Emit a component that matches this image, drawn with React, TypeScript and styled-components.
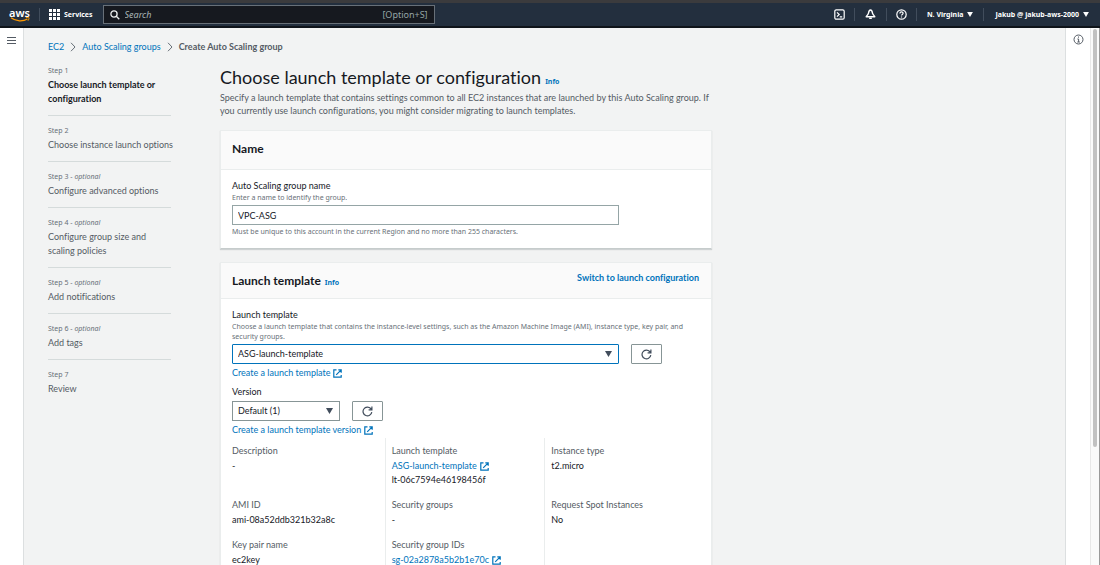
import React from 'react';
import styled, { createGlobalStyle, css } from 'styled-components';

const smallFont = "'Noto Sans', 'Open Sans', sans-serif";

const GlobalStyle = createGlobalStyle`
  *, *::before, *::after { box-sizing: border-box; }
  html, body { margin: 0; }
  body {
    font-family: Lato, 'Noto Sans', sans-serif;
    font-size: 9px;
    line-height: 14px;
    font-variant-ligatures: none;
    color: #16191f;
    background: #f2f3f3;
  }
  button, input, select { font: inherit; color: inherit; }
  h1, h2, p, ol, dl, dt, dd { margin: 0; padding: 0; }
  ol { list-style: none; }
`;

const Shell = styled.div`
  display: flex;
  flex-direction: column;
  height: 100vh;
  overflow: hidden;
`;

const TopBar = styled.header`
  display: flex;
  align-items: center;
  flex: none;
  height: 28px;
  padding-left: 9px;
  background: #232f3e;
  border-top: 3px solid #3b3b3d;
  border-bottom: 2px solid #0f141a;
  color: #fff;
  font-family: ${smallFont};
  font-size: 7px;
  font-weight: 700;
`;

const Logo = styled.a`
  display: flex;
  flex-direction: column;
  align-items: center;
  width: 21px;
  color: #fff;
  font-size: 11px;
  font-weight: 600;
  line-height: 9px;
  text-decoration: none;
  svg { display: block; }
`;

const BarDivider = styled.span<{ $space?: number }>`
  width: 1px;
  height: 13px;
  margin: 0 ${(p) => p.$space ?? 0}px;
  background: #414d5c;
`;

const BarButton = styled.button<{ $pad: number }>`
  display: flex;
  align-items: center;
  gap: 4px;
  padding: 0 ${(p) => p.$pad}px;
  border: 0;
  background: none;
  color: #fff;
  white-space: nowrap;
  svg { display: block; }
`;

const SearchBox = styled.label`
  display: flex;
  align-items: center;
  gap: 5px;
  flex: 0 1 332px;
  min-width: 120px;
  height: 19px;
  margin-left: 10px;
  padding: 0 6px;
  border: 1px solid #687078;
  background: #16191f;
  color: #95a5a6;
  font-size: 9px;
  font-weight: 400;
`;

const SearchInput = styled.input`
  flex: 1;
  min-width: 0;
  padding: 0;
  border: 0;
  outline: 0;
  background: none;
  &::placeholder { color: #aab7b8; font-style: italic; opacity: 1; }
`;

const BarEnd = styled.div`
  display: flex;
  align-items: center;
  margin-left: auto;
`;

const Body = styled.div`
  display: flex;
  flex: 1;
  min-height: 0;
`;

const Rail = styled.aside<{ $side: 'left' | 'right' }>`
  flex: none;
  width: ${(p) => (p.$side === 'left' ? 24 : 25)}px;
  padding-top: 6px;
  background: #fff;
  ${(p) =>
    p.$side === 'left'
      ? css`border-right: 1px solid #dcdfe0;`
      : css`border-left: 1px solid #dcdfe0;`}
`;

const RailButton = styled.button`
  display: flex;
  justify-content: center;
  width: 100%;
  padding: 0;
  border: 0;
  background: none;
  color: #545b64;
`;

const ScrollTrack = styled.div`
  flex: none;
  width: 10px;
  padding: 1px 2px 0;
  background: #fafafa;
  border-left: 1px solid #e8e8e8;
  border-right: 1px solid #9a9a9a;
`;

const ScrollThumb = styled.div`
  height: 78%;
  border-radius: 3px;
  background: #c1c1c1;
`;

const Main = styled.main`
  flex: 1;
  min-width: 0;
  overflow: hidden;
  padding: 12px 24px 0;
`;

const Breadcrumbs = styled.nav`
  display: flex;
  align-items: center;
  gap: 6px;
  height: 14px;
  margin-bottom: 10px;
`;

const Crumb = styled.span`
  color: #545b64;
  font-weight: 700;
`;

const Link = styled.a<{ $bold?: boolean }>`
  color: #0073bb;
  font-weight: ${(p) => (p.$bold ? 700 : 400)};
  text-decoration: none;
  svg { margin-left: 3px; vertical-align: -2px; }
`;

const InfoLink = styled(Link)`
  margin-left: 4px;
  font-family: ${smallFont};
  font-size: 7px;
  font-weight: 700;
  line-height: 1;
`;

const Columns = styled.div`
  display: grid;
  grid-template-columns: 123px minmax(0, 492px);
  gap: 49px;
`;

const Step = styled.li<{ $active?: boolean }>`
  padding-bottom: 9px;
  margin-bottom: 8px;
  border-bottom: 1px solid #d5dbdb;
  color: ${(p) => (p.$active ? '#16191f' : '#545b64')};
  font-weight: ${(p) => (p.$active ? 700 : 400)};
  &:last-child { border-bottom: 0; }
`;

const StepLabel = styled.div`
  color: #687078;
  font-family: ${smallFont};
  font-size: 7px;
  font-weight: 400;
`;

const StepTitle = styled.div`
  margin-right: -3px;
`;

const PageTitle = styled.h1`
  font-size: 18px;
  font-weight: 400;
  line-height: 27px;
`;

const Intro = styled.p`
  margin-bottom: 13px;
  color: #545b64;
  line-height: 13px;
`;

const Card = styled.section`
  margin-bottom: 13px;
  background: #fff;
  border: 1px solid #eaeded;
  border-bottom-color: #c6cccc;
  box-shadow: 0 1px 1px rgba(0, 28, 36, 0.15);
`;

const CardHeader = styled.header<{ $height: number }>`
  display: flex;
  align-items: flex-start;
  justify-content: space-between;
  height: ${(p) => p.$height}px;
  padding: 8px 12px 0 11px;
  background: #fafafa;
  border-bottom: 1px solid #eaeded;
`;

const CardTitle = styled.h2`
  font-size: 12px;
  font-weight: 700;
  line-height: 20px;
`;

const CardBody = styled.div`
  padding: 9px 0 11px 11px;
`;

const Field = styled.div`
  & + & { margin-top: 5px; }
`;

const FieldLabel = styled.label`
  display: block;
`;

const Hint = styled.p`
  padding-right: 12px;
  color: #687078;
  font-family: ${smallFont};
  font-size: 7px;
  line-height: 10px;
`;

const ControlRow = styled.div`
  display: flex;
  align-items: center;
  gap: 12px;
  margin: 2px 0;
`;

const TextInput = styled.input`
  flex: 0 1 387px;
  min-width: 0;
  height: 20px;
  padding: 0 5px;
  border: 1px solid #95a5a6;
  background: #fff;
`;

const SelectWrap = styled.div<{ $width: number }>`
  position: relative;
  flex: 0 1 ${(p) => p.$width}px;
  svg { position: absolute; right: 7px; top: 7px; pointer-events: none; color: #414d5c; }
`;

const Select = styled.select<{ $focus?: boolean }>`
  display: block;
  width: 100%;
  height: 20px;
  padding: 0 18px 0 5px;
  appearance: none;
  border: 1px solid ${(p) => (p.$focus ? '#0073bb' : '#879596')};
  border-radius: ${(p) => (p.$focus ? 1 : 0)}px;
  background: #fff;
`;

const RefreshButton = styled.button`
  display: flex;
  align-items: center;
  justify-content: center;
  width: 31px;
  height: 20px;
  padding: 0;
  border: 1px solid #879596;
  border-radius: 1px;
  background: #fff;
  color: #414d5c;
`;

const LinkRow = styled.div`
  height: 14px;
`;

const Details = styled.dl`
  display: grid;
  grid-template-columns: repeat(3, 1fr);
  margin-top: 1px;
`;

const Cell = styled.div`
  padding: 6px 0 5px;
  &:not(:nth-child(3n + 1)) {
    margin-left: -7px;
    padding-left: 6px;
    border-left: 1px solid #eaeded;
  }
`;

const Term = styled.dt`
  margin-bottom: 1px;
  color: #545b64;
`;

const Caret = ({ size = 7 }: { size?: number }) => (
  <svg width={size} height={size - 1} viewBox="0 0 7 6" aria-hidden="true">
    <path d="M0 0h7L3.500 6z" fill="currentColor" />
  </svg>
);

const Chevron = () => (
  <svg width="6" height="10" viewBox="0 0 6 10" fill="none" stroke="#687078" aria-hidden="true">
    <path d="M1 .8 5 5 1 9.200" />
  </svg>
);

const External = () => (
  <svg width="9" height="9" viewBox="0 0 9 9" fill="none" stroke="#0073bb" strokeWidth="1.200" aria-hidden="true">
    <path d="M3.500.8H.8v7.400h7.400V6M5.300.8h2.900v2.900M8.200.8 3.200 5.800" />
  </svg>
);

const Refresh = () => (
  <svg width="11" height="11" viewBox="0 0 11 11" fill="none" stroke="currentColor" strokeWidth="1.200" aria-hidden="true">
    <path d="M9.800 6.200A4.400 4.400 0 1 1 8.700 2.500L9.700 3.600M9.900.6v3.300H6.600" />
  </svg>
);

const Out = ({ children }: { children: React.ReactNode }) => (
  <Link href="#">
    {children}
    <External />
  </Link>
);

const steps = [
  { title: 'Choose launch template or configuration' },
  { title: 'Choose instance launch options' },
  { title: 'Configure advanced options', optional: true },
  { title: 'Configure group size and scaling policies', optional: true },
  { title: 'Add notifications', optional: true },
  { title: 'Add tags', optional: true },
  { title: 'Review' },
];

const details: { term: string; values: React.ReactNode[] }[] = [
  { term: 'Description', values: ['-'] },
  { term: 'Launch template', values: [<Out>ASG-launch-template</Out>, 'lt-06c7594e46198456f'] },
  { term: 'Instance type', values: ['t2.micro'] },
  { term: 'AMI ID', values: ['ami-08a52ddb321b32a8c'] },
  { term: 'Security groups', values: ['-'] },
  { term: 'Request Spot Instances', values: ['No'] },
  { term: 'Key pair name', values: ['ec2key'] },
  { term: 'Security group IDs', values: [<Out>sg-02a2878a5b2b1e70c</Out>] },
];

export default function App() {
  return (
    <>
      <GlobalStyle />
      <Shell>
        <TopBar>
          <Logo href="#">
            aws
            <svg width="20" height="5" viewBox="0 0 20 5" fill="none" stroke="#f90" aria-hidden="true">
              <path d="M1 .8c5 3.800 12 3.800 16.500 1.200" strokeWidth="1.300" />
              <path d="M15.800.7c2-.4 3-.2 3.200.1.200.5-.3 2-1 2.900" />
            </svg>
          </Logo>
          <BarDivider $space={9} />
          <BarButton $pad={0}>
            <svg width="11" height="11" viewBox="0 0 11 11" fill="currentColor" aria-hidden="true">
              {[0, 4, 8].map((y) => [0, 4, 8].map((x) => <rect key={`${x}-${y}`} x={x} y={y} width="3" height="3" />))}
            </svg>
            Services
          </BarButton>
          <SearchBox>
            <svg width="10" height="10" viewBox="0 0 10 10" fill="none" stroke="#eaeded" strokeWidth="1.300" aria-hidden="true">
              <circle cx="4" cy="4" r="3.100" />
              <path d="m6.300 6.300 3 3" />
            </svg>
            <SearchInput type="search" placeholder="Search" aria-label="Search" />
            <span>[Option+S]</span>
          </SearchBox>
          <BarEnd>
            <BarButton $pad={9} aria-label="CloudShell">
              <svg width="11" height="11" viewBox="0 0 11 11" fill="none" stroke="currentColor" strokeWidth="1.200" aria-hidden="true">
                <rect x=".8" y=".8" width="9.400" height="9.400" rx="1.500" />
                <path d="m3 3.300 2.200 2.200L3 7.700M5.800 7.900h2.400" />
              </svg>
            </BarButton>
            <BarDivider />
            <BarButton $pad={10} aria-label="Notifications">
              <svg width="11" height="11" viewBox="0 0 11 11" fill="none" stroke="currentColor" strokeWidth="1.400" strokeLinejoin="round" aria-hidden="true">
                <path d="M5.500 1C4 1 3.700 2.600 3.500 4.200 3.300 5.600 1.800 6.300 1.200 7.800h8.600C9.200 6.300 7.700 5.600 7.500 4.200 7.300 2.600 7 1 5.500 1z" />
                <path d="M4.200 8.800c.2 1.600 2.400 1.600 2.600 0z" fill="currentColor" stroke="none" />
                <path d="M4.300 9.300h2.400" />
              </svg>
            </BarButton>
            <BarDivider />
            <BarButton $pad={9} aria-label="Help">
              <svg width="11" height="11" viewBox="0 0 11 11" fill="none" stroke="currentColor" strokeWidth="1.200" aria-hidden="true">
                <circle cx="5.500" cy="5.500" r="4.700" />
                <path d="M3.900 4.400c0-2 3.200-2 3.200-.1 0 1.200-1.600 1-1.600 2.300M5.500 7.400v1.200" />
              </svg>
            </BarButton>
            <BarDivider />
            <BarButton $pad={10}>N. Virginia <Caret size={6} /></BarButton>
            <BarDivider />
            <BarButton $pad={11}>Jakub @ jakub-aws-2000 <Caret size={6} /></BarButton>
          </BarEnd>
        </TopBar>
        <Body>
          <Rail $side="left">
            <RailButton aria-label="Open navigation">
              <svg width="9" height="12" viewBox="0 0 9 12" stroke="currentColor" aria-hidden="true">
                <path d="M0 3.500h9M0 6.500h9M0 9.500h9" />
              </svg>
            </RailButton>
          </Rail>
          <Main>
            <Breadcrumbs aria-label="Breadcrumbs">
              <Link href="#">EC2</Link>
              <Chevron />
              <Link href="#">Auto Scaling groups</Link>
              <Chevron />
              <Crumb>Create Auto Scaling group</Crumb>
            </Breadcrumbs>
            <Columns>
              <ol>
                {steps.map((step, i) => (
                  <Step key={step.title} $active={i === 0}>
                    <StepLabel>
                      Step {i + 1}
                      {step.optional && <> - <i>optional</i></>}
                    </StepLabel>
                    <StepTitle>{step.title}</StepTitle>
                  </Step>
                ))}
              </ol>
              <div>
                <PageTitle>
                  Choose launch template or configuration
                  <InfoLink href="#">Info</InfoLink>
                </PageTitle>
                <Intro>
                  Specify a launch template that contains settings common to all EC2 instances that are launched by this
                  Auto Scaling group. If you currently use launch configurations, you might consider migrating to launch
                  templates.
                </Intro>
                <Card>
                  <CardHeader $height={39}>
                    <CardTitle>Name</CardTitle>
                  </CardHeader>
                  <CardBody>
                    <FieldLabel htmlFor="group-name">Auto Scaling group name</FieldLabel>
                    <Hint>Enter a name to identify the group.</Hint>
                    <ControlRow>
                      <TextInput id="group-name" defaultValue="VPC-ASG" />
                    </ControlRow>
                    <Hint>Must be unique to this account in the current Region and no more than 255 characters.</Hint>
                  </CardBody>
                </Card>
                <Card>
                  <CardHeader $height={36}>
                    <CardTitle>
                      Launch template
                      <InfoLink href="#">Info</InfoLink>
                    </CardTitle>
                    <Link href="#" $bold>Switch to launch configuration</Link>
                  </CardHeader>
                  <CardBody>
                    <Field>
                      <FieldLabel htmlFor="template">Launch template</FieldLabel>
                      <Hint>
                        Choose a launch template that contains the instance-level settings, such as the Amazon Machine
                        Image (AMI), instance type, key pair, and security groups.
                      </Hint>
                      <ControlRow>
                        <SelectWrap $width={387}>
                          <Select id="template" $focus>
                            <option>ASG-launch-template</option>
                          </Select>
                          <Caret />
                        </SelectWrap>
                        <RefreshButton aria-label="Refresh launch templates"><Refresh /></RefreshButton>
                      </ControlRow>
                      <LinkRow><Out>Create a launch template</Out></LinkRow>
                    </Field>
                    <Field>
                      <FieldLabel htmlFor="version">Version</FieldLabel>
                      <ControlRow>
                        <SelectWrap $width={108}>
                          <Select id="version">
                            <option>Default (1)</option>
                          </Select>
                          <Caret />
                        </SelectWrap>
                        <RefreshButton aria-label="Refresh versions"><Refresh /></RefreshButton>
                      </ControlRow>
                      <LinkRow><Out>Create a launch template version</Out></LinkRow>
                    </Field>
                    <Details>
                      {details.map((d) => (
                        <Cell key={d.term}>
                          <Term>{d.term}</Term>
                          {d.values.map((v, i) => <dd key={i}>{v}</dd>)}
                        </Cell>
                      ))}
                      <Cell />
                    </Details>
                  </CardBody>
                </Card>
              </div>
            </Columns>
          </Main>
          <Rail $side="right">
            <RailButton aria-label="Open help panel">
              <svg width="11" height="11" viewBox="0 0 11 11" fill="none" stroke="currentColor" aria-hidden="true">
                <circle cx="5.500" cy="5.500" r="4.500" />
                <path d="M5.500 2.500v1.200M4.400 5h1.200v3M4.300 8h2.600" />
              </svg>
            </RailButton>
          </Rail>
          <ScrollTrack>
            <ScrollThumb />
          </ScrollTrack>
        </Body>
      </Shell>
    </>
  );
}
